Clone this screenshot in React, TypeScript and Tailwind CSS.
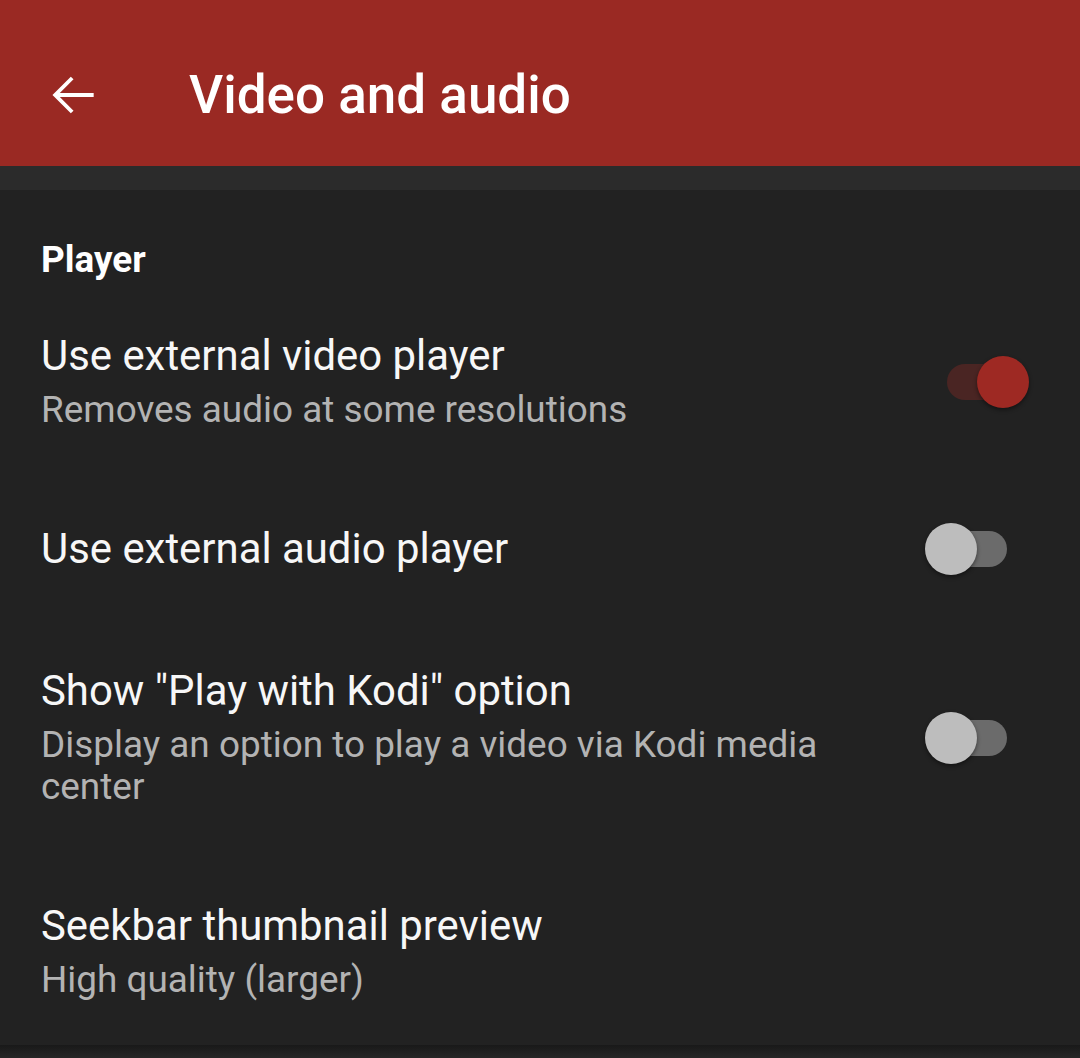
import React from 'react';

// ─── Settings data ────────────────────────────────────────────────────────────

type Pref = {
  title: string;
  summary?: string;
  toggle?: boolean;
  last?: boolean;
};

const PREFS: Pref[] = [
  { title: 'Use external video player', summary: 'Removes audio at some resolutions', toggle: true },
  { title: 'Use external audio player', toggle: false },
  {
    title: 'Show "Play with Kodi" option',
    summary: 'Display an option to play a video via Kodi media center',
    toggle: false,
  },
  { title: 'Seekbar thumbnail preview', summary: 'High quality (larger)', last: true },
];

// ─── Pieces ───────────────────────────────────────────────────────────────────

function BackArrow() {
  return (
    <svg width="62" height="62" viewBox="0 0 24 24" fill="#ffffff" aria-hidden="true">
      <path d="M20 11.25H6.9l5.3-5.3-1.05-1.05L4.05 12l7.1 7.1 1.05-1.05-5.3-5.3H20z" />
    </svg>
  );
}

function Switch({ on }: { on: boolean }) {
  return (
    <div className="relative h-[52px] w-[104px] shrink-0">
      <div
        className={
          on
            ? 'absolute left-[22px] top-[8px] h-[36px] w-[60px] rounded-full bg-[#4a2523]'
            : 'absolute left-[22px] top-[8px] h-[36px] w-[60px] rounded-full bg-[#6b6b6b]'
        }
      />
      <div
        className={
          on
            ? 'absolute left-[52px] top-0 h-[52px] w-[52px] rounded-full bg-[#9e2923] shadow-[0_2px_4px_rgba(0,0,0,0.45)]'
            : 'absolute left-0 top-0 h-[52px] w-[52px] rounded-full bg-[#bdbdbd] shadow-[0_2px_4px_rgba(0,0,0,0.45)]'
        }
      />
    </div>
  );
}

function PrefRow({ pref }: { pref: Pref }) {
  return (
    <div
      className={
        pref.last
          ? 'flex items-center pl-[41px] pr-[51px] pt-[48px] pb-[44px]'
          : 'flex items-center pl-[41px] pr-[51px] py-[46px]'
      }
    >
      <div className="flex-1 pr-[40px]">
        <p className="text-[41.9px] leading-[48px] text-[#f7f7f7]">{pref.title}</p>
        {pref.summary && (
          <p className="mt-[9px] max-w-[830px] text-[36.9px] leading-[42px] text-[#b3b3b3]">
            {pref.summary}
          </p>
        )}
      </div>
      {pref.toggle !== undefined && <Switch on={pref.toggle} />}
    </div>
  );
}

// ─── Screen ───────────────────────────────────────────────────────────────────

export default function App() {
  return (
    <div className="w-[1080px] h-[1058px] overflow-hidden bg-[#222222] font-['Roboto','Noto_Sans',sans-serif]">
      {/* Toolbar */}
      <header className="h-[166px] bg-[#9a2923] pt-[64px]">
        <div className="flex h-[62px] items-center">
          <div className="ml-[42px]">
            <BackArrow />
          </div>
          <h1 className="ml-[85px] text-[53px] font-medium leading-[62px] text-white">
            Video and audio
          </h1>
        </div>
      </header>
      <div className="h-[24px] bg-[#2b2b2b]" />

      {/* Player category */}
      <div className="pl-[41px] pt-[48px] pb-[4px]">
        <p className="text-[36.9px] font-bold leading-[44px] text-white">Player</p>
      </div>

      {PREFS.map((pref) => (
        <PrefRow key={pref.title} pref={pref} />
      ))}

      <div className="h-[17px] bg-gradient-to-b from-[#191919] to-[#2b2b2b]" />
    </div>
  );
}
